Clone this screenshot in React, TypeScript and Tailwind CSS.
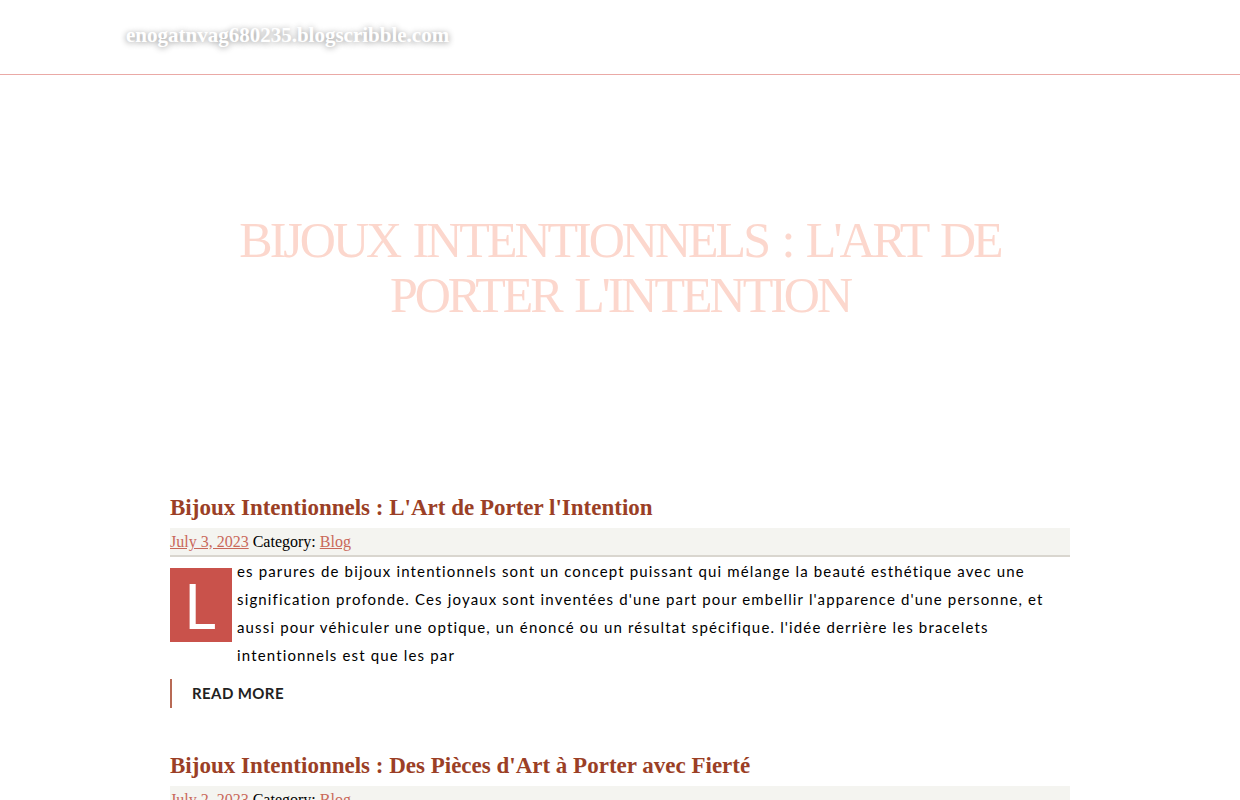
const POSTS = [
  {
    title: "Bijoux Intentionnels : L'Art de Porter l'Intention",
    date: "July 3, 2023",
    category: "Blog",
    excerpt:
      "es parures de bijoux intentionnels sont un concept puissant qui mélange la beauté esthétique avec une signification profonde. Ces joyaux sont inventées d'une part pour embellir l'apparence d'une personne, et aussi pour véhiculer une optique, un énoncé ou un résultat spécifique. l'idée derrière les bracelets intentionnels est que les par",
    initial: "L",
  },
  {
    title: "Bijoux Intentionnels : Des Pièces d'Art à Porter avec Fierté",
    date: "July 2, 2023",
    category: "Blog",
    excerpt:
      "es bijoux intentionnels sont bien plus que de simples accessoires de mode. Ils portent une signification profonde et un pouvoir symbolique qui les rend uniques.",
    initial: "L",
  },
];

function Post({ post }: { post: (typeof POSTS)[number] }) {
  return (
    <article className="mb-[44px]">
      <h2 className="font-['Liberation_Serif',serif] text-[23px] font-bold leading-[28px] text-[#9b3f26]">
        {post.title}
      </h2>
      <div className="mt-[6px] h-[29px] border-b-2 border-[#d9d6cf] bg-[#f4f4f0] font-['Liberation_Serif',serif] text-[16px] leading-[27px] text-black">
        <a href="#" className="text-[#c9685a] underline">
          {post.date}
        </a>{" "}
        Category:{" "}
        <a href="#" className="text-[#c9685a] underline">
          {post.category}
        </a>
      </div>
      <div className="flex font-['Lato',sans-serif] text-[15px] leading-[28px] tracking-[1.15px] text-black">
        <span className="mr-[5px] mt-[11px] flex h-[74px] w-[62px] shrink-0 items-center justify-center bg-[#c9524b] pr-[2px] font-['Lato',sans-serif] text-[62px] font-normal leading-none tracking-normal text-white">
          {post.initial}
        </span>
        <p className="min-w-0 flex-1">{post.excerpt}</p>
      </div>
      <div className="mt-[10px] h-[29px] border-l-2 border-[#b86a55] pl-[20px] font-['Lato',sans-serif] text-[15px] font-bold leading-[29px] tracking-[0.4px] text-[#222]">
        READ MORE
      </div>
    </article>
  );
}

export default function App() {
  return (
    <div className="min-h-screen bg-white">
      <header className="h-[75px] border-b border-[#eaa9a6]">
        <div className="pl-[126px] pt-[21px] font-['Liberation_Serif',serif] text-[21px] font-bold leading-[28px] text-white [text-shadow:0_1px_6px_rgba(0,0,0,0.45)]">
          enogatnvag680235.blogscribble.com
        </div>
      </header>
      <section className="flex h-[385px] items-center justify-center">
        <h1 className="w-[800px] text-center font-['Liberation_Serif',serif] text-[50px] font-normal uppercase leading-[55px] tracking-[-3px] [word-spacing:4px] text-[#fcd7cd]">
          Bijoux Intentionnels : L'Art de Porter l'Intention
        </h1>
      </section>
      <main className="mx-auto w-[900px] pt-[34px]">
        {POSTS.map((p, i) => (
          <Post key={i} post={p} />
        ))}
      </main>
    </div>
  );
}
